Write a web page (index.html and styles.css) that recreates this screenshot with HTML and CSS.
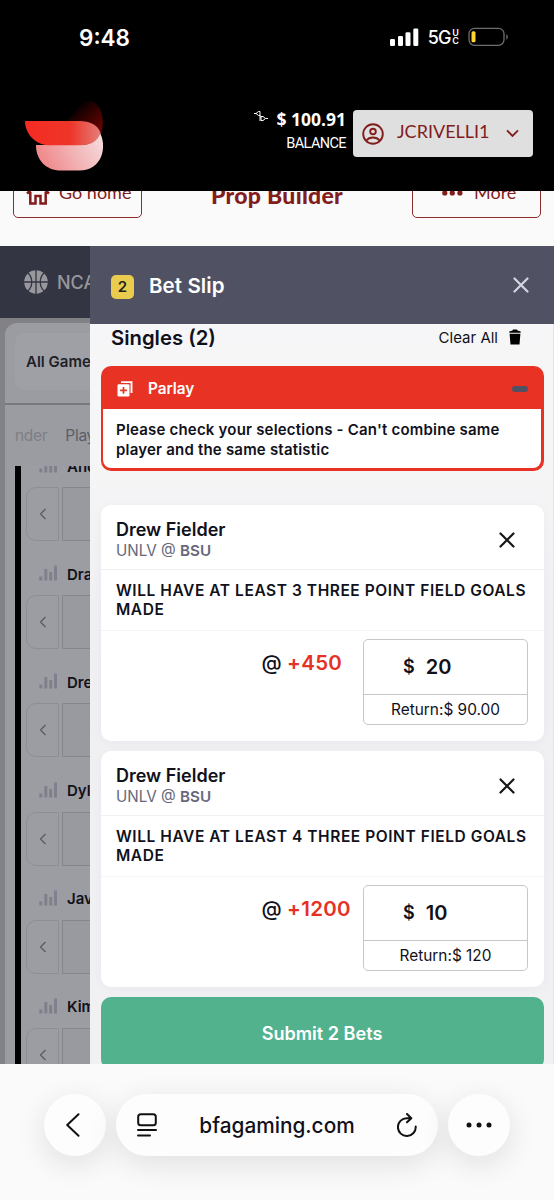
FILE: index.html
```html
<!DOCTYPE html>
<html lang="en">
<head>
<meta charset="utf-8">
<meta name="viewport" content="width=device-width, initial-scale=1">
<title>Bet Slip</title>
<link rel="stylesheet" href="styles.css">
</head>
<body>
<div class="screen">
  <div class="status">
    <span class="clock">9:48</span>
    <div class="status-right">
      <svg class="signal" width="29" height="19" viewBox="0 0 29 19" fill="#fff"><rect x="0" y="11" width="5" height="7" rx="1.3"/><rect x="8" y="8" width="5" height="10" rx="1.3"/><rect x="15.500" y="4.300" width="5" height="13.700" rx="1.300"/><rect x="23.300" y="0.500" width="5" height="17.500" rx="1.300"/></svg>
      <span class="network">5G</span>
      <span class="uc"><span>U</span><span>C</span></span>
      <svg class="battery" width="41" height="20" viewBox="0 0 41 20"><rect x="1" y="1.300" width="35" height="17" rx="5.500" fill="none" stroke="#6d6d6d" stroke-width="1.300"/><rect x="3.500" y="4.300" width="4" height="11" rx="1.500" fill="#ffd62e"/><path d="M38.300 7.300c2 .7 2 4.700 0 5.400z" fill="#6d6d6d"/></svg>
    </div>
  </div>

  <header class="topbar">
    <svg class="logo" width="84" height="76" viewBox="0 0 84 76">
      <defs>
        <linearGradient id="dark" x1="1" y1="1" x2="0.200" y2="0.200"><stop offset="0" stop-color="#780300"/><stop offset="0.450" stop-color="#420200"/><stop offset="1" stop-color="#000"/></linearGradient>
        <linearGradient id="pink" x1="0" y1="0.300" x2="1" y2="0"><stop offset="0" stop-color="#f08c8e"/><stop offset="0.450" stop-color="#f2b3b5"/><stop offset="1" stop-color="#f6dfe1"/></linearGradient>
        <linearGradient id="red" x1="0" y1="0" x2="1" y2="0"><stop offset="0" stop-color="#f52b23"/><stop offset="0.600" stop-color="#ee3529"/><stop offset="1" stop-color="#e27f79"/></linearGradient>
      </defs>
      <path d="M40 26C48 20 56 5 64 5C75 6 81 20 76 38Z" fill="url(#dark)"/>
      <path d="M11 49H55C65 49 72 45 75 37C82 50 78 74.500 54 74.500H36C21 74.500 11 64 11 49Z" fill="url(#pink)"/>
      <path d="M0 25H54C65 25 73 29 75.500 37C73 45 65 49.300 56 49.300H22C9 47.500 0 37 0 25Z" fill="url(#red)"/>
    </svg>
    <div class="account">
      <div class="balance">
        <div class="amount">
          <svg width="14" height="12" viewBox="0 0 14 12" fill="none" stroke="#fff" stroke-width="1"><path d="M0 3.500H2M2 3.500L4.500 1.500H6V5.500H4.500ZM6 5V7H7.500M7 6.500H9L11.500 8.500L9 10.500H7ZM5 8H7M5 10H7M11.500 8.500H14"/></svg>
          <span>$ 100.91</span>
        </div>
        <span class="balance-label">BALANCE</span>
      </div>
      <div class="user">
        <svg width="22" height="22" viewBox="0 0 22 22" fill="none" stroke="#821d1b" stroke-width="1.900"><circle cx="11" cy="11" r="9.800"/><circle cx="11" cy="8.500" r="2.800"/><path d="M4.300 17.500C7.500 13.500 14.500 13.500 17.700 17.500"/></svg>
        <span class="username">JCRIVELLI1</span>
        <svg class="chev" width="13" height="9" viewBox="0 0 13 9" fill="none" stroke="#821d1b" stroke-width="1.900"><path d="M1 1.300L6.500 6.800L12 1.300"/></svg>
      </div>
    </div>
  </header>

  <nav class="subnav">
    <div class="pill">
      <svg width="24" height="24" viewBox="0 0 24 24" fill="none" stroke="#821d1b" stroke-width="2.500"><path d="M1 12.500L12 2.500L23 12.500M4.300 10V22.500H9.500V15H14.500V22.500H19.700V10"/></svg>
      <span class="go">Go home</span>
    </div>
    <h1 class="title">Prop Builder</h1>
    <div class="pill">
      <svg class="dots" width="21" height="6" viewBox="0 0 21 6" fill="#821d1b"><circle cx="2.800" cy="3" r="2.600"/><circle cx="10.300" cy="3" r="2.600"/><circle cx="17.900" cy="3" r="2.600"/></svg>
      <span class="more">More</span>
    </div>
  </nav>

  <main class="content">
    <section class="behind">
      <div class="league">
        <svg width="24" height="24" viewBox="0 0 24 24"><circle cx="12" cy="12" r="11.800" fill="#97979c"/><path d="M12 0V24M0 12H24M4 3C9 8 9 16 4 21M20 3C15 8 15 16 20 21" fill="none" stroke="#343543" stroke-width="1.300"/></svg>
        <span>NCAAB</span>
      </div>
      <div class="panel">
        <div class="filter"><div class="select">All Games</div></div>
        <div class="tabs"><span class="faded">nder</span><span>Player</span></div>
        <div class="list">
          <div class="prop"><div class="name"><svg class="bars" width="19" height="16" viewBox="0 0 19 16"><path d="M0.300 11.500H3.300V15.500H0.300ZM5.300 4H8.300V15.500H5.300ZM10.200 7H13.200V15.500H10.200ZM15 0.500H18V15.500H15Z"/></svg>Andrew</div><div class="slots"><div class="prev"><svg width="8" height="12" viewBox="0 0 8 12"><path d="M6.500 1L1.500 6L6.500 11"/></svg></div><div class="slot"></div></div></div>
          <div class="prop"><div class="name"><svg class="bars" width="19" height="16" viewBox="0 0 19 16"><path d="M0.300 11.500H3.300V15.500H0.300ZM5.300 4H8.300V15.500H5.300ZM10.200 7H13.200V15.500H10.200ZM15 0.500H18V15.500H15Z"/></svg>Drake</div><div class="slots"><div class="prev"><svg width="8" height="12" viewBox="0 0 8 12"><path d="M6.500 1L1.500 6L6.500 11"/></svg></div><div class="slot"></div></div></div>
          <div class="prop"><div class="name"><svg class="bars" width="19" height="16" viewBox="0 0 19 16"><path d="M0.300 11.500H3.300V15.500H0.300ZM5.300 4H8.300V15.500H5.300ZM10.200 7H13.200V15.500H10.200ZM15 0.500H18V15.500H15Z"/></svg>Drew</div><div class="slots"><div class="prev"><svg width="8" height="12" viewBox="0 0 8 12"><path d="M6.500 1L1.500 6L6.500 11"/></svg></div><div class="slot"></div></div></div>
          <div class="prop"><div class="name"><svg class="bars" width="19" height="16" viewBox="0 0 19 16"><path d="M0.300 11.500H3.300V15.500H0.300ZM5.300 4H8.300V15.500H5.300ZM10.200 7H13.200V15.500H10.200ZM15 0.500H18V15.500H15Z"/></svg>Dylan</div><div class="slots"><div class="prev"><svg width="8" height="12" viewBox="0 0 8 12"><path d="M6.500 1L1.500 6L6.500 11"/></svg></div><div class="slot"></div></div></div>
          <div class="prop"><div class="name"><svg class="bars" width="19" height="16" viewBox="0 0 19 16"><path d="M0.300 11.500H3.300V15.500H0.300ZM5.300 4H8.300V15.500H5.300ZM10.200 7H13.200V15.500H10.200ZM15 0.500H18V15.500H15Z"/></svg>Javan</div><div class="slots"><div class="prev"><svg width="8" height="12" viewBox="0 0 8 12"><path d="M6.500 1L1.500 6L6.500 11"/></svg></div><div class="slot"></div></div></div>
          <div class="prop"><div class="name"><svg class="bars" width="19" height="16" viewBox="0 0 19 16"><path d="M0.300 11.500H3.300V15.500H0.300ZM5.300 4H8.300V15.500H5.300ZM10.200 7H13.200V15.500H10.200ZM15 0.500H18V15.500H15Z"/></svg>Kimani</div><div class="slots"><div class="prev"><svg width="8" height="12" viewBox="0 0 8 12"><path d="M6.500 1L1.500 6L6.500 11"/></svg></div><div class="slot"></div></div></div>
        </div>
      </div>
    </section>

    <aside class="slip">
      <div class="slip-head">
        <span class="count">2</span>
        <span class="slip-title">Bet Slip</span>
        <svg width="16" height="16" viewBox="0 0 16 16" fill="none" stroke="#d5d5e2" stroke-width="2.200" stroke-linecap="round"><path d="M1.500 1.500L14.500 14.500M14.500 1.500L1.500 14.500"/></svg>
      </div>
      <div class="slip-body">
        <div class="singles">
          <h2>Singles (2)</h2>
          <span class="clear">Clear All</span>
          <svg width="12" height="16" viewBox="0 0 12 16"><path d="M0.300 3.700V2.500L3.500 1.500L4 .5H8L8.500 1.500L11.700 2.500V3.700ZM.6 4.800H11.400L10.500 15.500H1.500Z"/></svg>
        </div>
        <div class="parlay">
          <div class="parlay-head">
            <svg width="16" height="16" viewBox="0 0 16 16"><path d="M4 1.100H14.500V12" fill="none" stroke="#fff" stroke-width="1.900"/><rect x="0.500" y="3.300" width="12" height="12.200" rx="1.300" fill="#fff"/><path d="M6.500 6V12.800M3.100 9.400H9.900" stroke="#e93323" stroke-width="1.700"/></svg>
            <span>Parlay</span>
            <i class="minus"></i>
          </div>
          <p class="warning">Please check your selections - Can't combine same<br>player and the same statistic</p>
        </div>

        <article class="bet">
          <div class="bet-head">
            <div><h3>Drew Fielder</h3><p>UNLV @ <b>BSU</b></p></div>
            <svg width="16" height="16" viewBox="0 0 16 16" fill="none" stroke="#151515" stroke-width="2.200" stroke-linecap="round"><path d="M1.500 1.500L14.500 14.500M14.500 1.500L1.500 14.500"/></svg>
          </div>
          <p class="market">WILL HAVE AT LEAST 3 THREE POINT FIELD GOALS<br>MADE</p>
          <div class="wager">
            <div class="odds">@ <em>+450</em></div>
            <div class="stake">
              <div class="risk"><span class="cur">$</span><span>20</span></div>
              <div class="return">Return:$ 90.00</div>
            </div>
          </div>
        </article>

        <article class="bet">
          <div class="bet-head">
            <div><h3>Drew Fielder</h3><p>UNLV @ <b>BSU</b></p></div>
            <svg width="16" height="16" viewBox="0 0 16 16" fill="none" stroke="#151515" stroke-width="2.200" stroke-linecap="round"><path d="M1.500 1.500L14.500 14.500M14.500 1.500L1.500 14.500"/></svg>
          </div>
          <p class="market">WILL HAVE AT LEAST 4 THREE POINT FIELD GOALS<br>MADE</p>
          <div class="wager">
            <div class="odds">@ <em>+1200</em></div>
            <div class="stake">
              <div class="risk"><span class="cur">$</span><span>10</span></div>
              <div class="return">Return:$ 120</div>
            </div>
          </div>
        </article>

        <button class="submit">Submit 2 Bets</button>
      </div>
    </aside>
  </main>

  <footer class="browser">
    <div class="round"><svg width="14" height="24" viewBox="0 0 14 24" fill="none" stroke="#111" stroke-width="2" stroke-linecap="round" stroke-linejoin="round"><path d="M12.500 1.300L1.200 12L12.500 22.700"/></svg></div>
    <div class="address">
      <svg width="20" height="24" viewBox="0 0 20 24" fill="none" stroke="#111" stroke-width="2" stroke-linecap="round"><rect x="1.200" y="1.200" width="17.600" height="11" rx="2.500"/><path d="M1 17H19M1 22.500H13"/></svg>
      <span class="url">bfagaming.com</span>
      <svg width="20" height="24" viewBox="0 0 20 24" fill="none" stroke="#111" stroke-width="2" stroke-linecap="round" stroke-linejoin="round"><path d="M18.700 13.500A8.900 8.900 0 1 1 9.800 5.200H14M10 1L14.300 5.200L10 9.300"/></svg>
    </div>
    <div class="round"><svg width="26" height="6" viewBox="0 0 26 6" fill="#111"><circle cx="3" cy="3" r="2.500"/><circle cx="13" cy="3" r="2.500"/><circle cx="23" cy="3" r="2.500"/></svg></div>
  </footer>
</div>
</body>
</html>
```
FILE: styles.css
```css
* { box-sizing: border-box; margin: 0; padding: 0; }
body { font-family: Inter, "Liberation Sans", sans-serif; color: #11111b; }
svg { display: block; flex: none; }
.screen { width: 554px; height: 1200px; overflow: hidden; display: flex; flex-direction: column; background: #fbfafb; white-space: nowrap; }

.status { height: 76px; flex: none; background: #000; color: #fff; display: flex; justify-content: space-between; padding: 0 45px 2px 79px; align-items: center; }
.clock { font-size: 22.5px; font-weight: 600; }
.status-right { display: flex; align-items: center; }
.network { font-size: 18px; font-weight: 500; margin-left: 9px; letter-spacing: -1px; }
.uc { display: flex; flex-direction: column; font-size: 9px; font-weight: 600; line-height: 8.500px; margin: 0 9px 0 2px; }

.topbar { height: 115px; flex: none; background: #000; display: flex; justify-content: space-between; padding: 20px 21px 0 25px; }
.account { display: flex; gap: 7px; padding-top: 14px; }
.balance { display: flex; flex-direction: column; align-items: flex-end; color: #fff; }
.amount { display: flex; gap: 8px; font: 700 17.500px/19px "Open Sans", sans-serif; }
.balance-label { font: 400 14.500px/18px Roboto, sans-serif; letter-spacing: -.6px; margin-top: 6px; }
.user { width: 180px; height: 47px; border-radius: 4px; background: #dfdfdf; display: flex; align-items: center; padding: 0 14px 0 9px; color: #821d1b; }
.username { font: 400 18px/22px Lato, sans-serif; margin-left: 13px; margin-top: -5px; }
.chev { margin-left: auto; }

.subnav { height: 55px; flex: none; overflow: hidden; display: flex; justify-content: space-between; align-items: flex-end; padding: 0 13px 28px; color: #821d1b; }
.pill { width: 129px; height: 50px; flex: none; border: 1.500px solid #8c2c2b; border-radius: 5px; display: flex; align-items: center; padding-left: 12px; font: 400 18px/22px Lato, sans-serif; }
.pill .go { margin: -2px 0 0 9px; }
.pill .dots { margin-left: 17px; }
.pill .more { margin: -2px 0 0 11px; }
.title { font: 900 23px/28px Lato, sans-serif; letter-spacing: .3px; margin-bottom: 9px; }

.content { height: 818px; flex: none; display: flex; overflow: hidden; }
.behind { width: 90px; flex: none; overflow: hidden; background: #828286; }
.league { height: 72px; background: #343543; color: #97979c; display: flex; align-items: center; gap: 9px; padding-left: 24px; font-size: 18px; font-weight: 500; }
.panel { width: 400px; margin: 5px 0 0 5px; border-radius: 12px 0 0 0; background: #9b9ca1; overflow: hidden; }
.filter { height: 82px; padding: 10px 0 0 10px; border-bottom: 2px solid #78797e; }
.select { height: 57px; border-radius: 10px; background: #9fa0a6; padding-left: 11px; font-size: 15px; line-height: 57px; font-weight: 600; color: #202027; }
.tabs { height: 61px; display: flex; gap: 18px; padding-left: 10px; font-size: 15.500px; letter-spacing: -.3px; line-height: 61px; color: #5c5d68; }
.faded { color: #7d7e86; }
.list { margin-left: 10px; border-left: 6px solid #020204; height: 598px; overflow: hidden; background: #9c9da2; }
.prop { height: 108px; padding-left: 5px; margin-bottom: 0.200px; }
.prop:first-child { margin-top: -16px; }
.name { display: flex; align-items: center; height: 32px; gap: 9px; padding-left: 13px; font-size: 15px; font-weight: 600; }
.bars { fill: #7f808b; margin-top: -2px; }
.slots { display: flex; gap: 3px; margin-top: 5px; }
.prev { width: 33px; height: 54px; border: 1px solid #8e8f95; border-radius: 10px 0 0 10px; display: flex; align-items: center; justify-content: center; }
.prev svg { fill: none; stroke: #5b5c63; stroke-width: 1.300; }
.slot { width: 200px; height: 54px; border: 1px solid #85868c; background: #999a9f; }

.slip { flex: 1; background: linear-gradient(#f6f6f8 0, #f6f6f7 25%, #f0f0f3 45%, #f1f1f4 100%); border-right: 1px solid #e4e4ea; }
.slip-head { height: 78px; background: #505264; display: flex; align-items: center; padding: 0 25px 0 21px; margin-right: -1px; color: #fff; }
.count { width: 23px; height: 24px; border-radius: 5px; background: #e9cc4e; color: #24221e; font-size: 15px; font-weight: 600; line-height: 24px; text-align: center; margin-top: 3px; }
.slip-title { font-size: 20.500px; letter-spacing: .1px; font-weight: 600; margin-left: 15px; flex: 1; }
.slip-body { padding: 0 9.500px 0 10.500px; }
.singles { height: 42px; display: flex; align-items: center; padding: 0 22.500px 16px 10.500px; }
.singles h2 { font-size: 20.300px; font-weight: 600; flex: 1; }
.clear { font-size: 15px; margin-right: 11px; }
.parlay { height: 104.500px; border-radius: 10px; padding: 0 2.500px 2.500px; background: #e83324; }
.parlay-head { height: 43px; color: #fff; display: flex; align-items: center; padding: 2px 13px 0 14px; font-size: 15.300px; font-weight: 600; gap: 15px; }
.minus { width: 16px; height: 6px; border-radius: 3px; background: #505264; margin-left: auto; }
.warning { height: 59px; background: #fff; border-radius: 0 0 8px 8px; padding: 11px 0 0 13px; font-size: 15px; line-height: 19.500px; font-weight: 600; letter-spacing: .2px; }

.bet { height: 236px; margin-bottom: 10px; border-radius: 10px; background: #fff; box-shadow: 0 2px 12px rgba(40, 40, 80, .035); }
.parlay + .bet { margin-top: 34px; }
.bet-head { height: 65px; border-bottom: 1px solid #f0f0f3; display: flex; justify-content: space-between; align-items: center; padding: 7px 28.500px 0 15.500px; }
.bet h3 { font-size: 18px; line-height: 22px; font-weight: 600; }
.bet-head p { font-size: 15.200px; line-height: 20px; color: #66677a; }
.bet-head b { font-weight: 600; }
.market { height: 61px; border-bottom: 1px solid #f4f4f6; padding: 11px 0 0 15.500px; font-size: 15.500px; line-height: 19.500px; font-weight: 600; letter-spacing: .56px; }
.wager { display: flex; justify-content: space-between; padding: 8px 15.500px 0 161px; }
.odds { font-size: 20.500px; line-height: 47px; font-weight: 500; }
.odds em { font-style: normal; font-weight: 600; color: #e43226; letter-spacing: .3px; }
.stake { width: 165px; height: 86px; border: 1.500px solid #c7c7cb; border-radius: 5px; }
.risk { height: 55px; border-bottom: 1px solid #c7c7cb; display: flex; align-items: center; padding-left: 39px; font-size: 20px; font-weight: 600; gap: 11px; }
.cur { font-size: 18px; }
.return { text-align: center; font-size: 15.400px; line-height: 29px; }
.submit { display: block; width: 100%; height: 72px; border: 0; border-radius: 10px; background: #52b28e; color: #fff; font: 600 18.100px Inter, sans-serif; }

.browser { height: 136px; flex: none; display: flex; gap: 10px; justify-content: center; padding-top: 30px; background: #fbfafb; overflow: hidden; }
.round, .address { height: 62px; border-radius: 31px; background: #fefdfe; display: flex; align-items: center; justify-content: center; box-shadow: 0 8px 30px rgba(20, 15, 20, .11); }
.round { width: 62px; }
.round:first-child svg { margin-right: 4px; }
.address { width: 322px; justify-content: space-between; padding: 0 21px 0 21px; }
.url { font-size: 20.800px; font-weight: 500; }
```
